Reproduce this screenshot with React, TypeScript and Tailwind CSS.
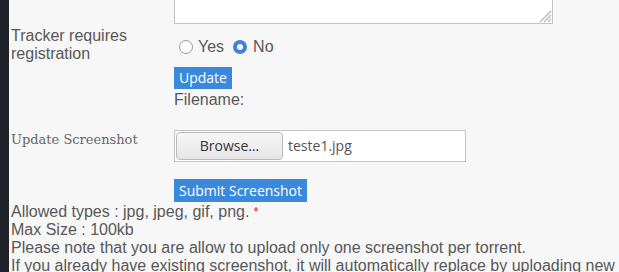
import React from "react";

export default function App() {
  const sans = { fontFamily: '"Liberation Sans", Arial, sans-serif' };
  return (
    <div className="flex h-[272px] w-[619px] overflow-hidden bg-[#f7f7f7]">
      <div className="w-[9px] shrink-0 bg-[#1e2127]" />
      <div className="flex-1 pl-[2px] text-[16px] leading-[18px] text-[#575757]" style={sans}>
        {/* textarea bottom */}
        <div className="flex">
          <div className="w-[163px] shrink-0" />
          <div className="relative h-[24px] w-[379px] border-x border-b border-[#c4c4c4] bg-white">
            <svg className="absolute bottom-0 right-0" width="14" height="14" viewBox="0 0 14 14">
              <path d="M13 2 L2 13 M13 6 L6 13 M13 10 L10 13" stroke="#b5b5b5" strokeWidth="1.3" />
            </svg>
          </div>
        </div>
        {/* tracker row */}
        <div className="mt-[3px] flex items-center">
          <div className="w-[150px] shrink-0">Tracker requires registration</div>
          <div className="ml-[13px] flex items-center pl-[5px] pt-[4px]">
            <span className="box-border h-[14px] w-[14px] rounded-full border border-[#9a9a9a] bg-white" />
            <span className="ml-[5px]">Yes</span>
            <span className="ml-[9px] box-border h-[14px] w-[14px] rounded-full border-[4px] border-[#3b84d9] bg-white" />
            <span className="ml-[6px]">No</span>
          </div>
        </div>
        <div className="flex">
          <div className="w-[163px] shrink-0" />
          <div className="flex flex-col items-start">
            <div
              className="mt-[4px] flex h-[22px] items-center bg-[#3b89dd] px-[5px] text-[14px] text-white"
              style={{ fontFamily: '"Open Sans", sans-serif' }}
            >
              Update
            </div>
            <div className="mt-[2px]">Filename:</div>
          </div>
        </div>
        {/* screenshot row */}
        <div className="mt-[21px] flex items-start">
          <div
            className="w-[163px] shrink-0 pt-[1px] text-[13px] text-[#666]"
            style={{ fontFamily: '"DejaVu Serif", serif' }}
          >
            Update Screenshot
          </div>
          <div className="flex h-[32px] w-[292px] items-center border border-[#c4c4c4] bg-white">
            <div
              className="ml-[1px] flex h-[28px] w-[107px] items-center justify-center rounded-[4px] border border-[#b9b9b9] bg-gradient-to-b from-[#f6f6f6] to-[#e6e6e6] text-[14px] text-[#333]"
              style={{ fontFamily: '"Open Sans", sans-serif' }}
            >
              Browse…
            </div>
            <span
              className="ml-[5px] text-[14px] text-[#555]"
              style={{ fontFamily: '"Open Sans", sans-serif' }}
            >
              teste1.jpg
            </span>
          </div>
        </div>
        <div className="flex">
          <div className="w-[163px] shrink-0" />
          <div
            className="mt-[17px] flex h-[23px] items-center bg-[#3b89dd] px-[5px] text-[14px] text-white"
            style={{ fontFamily: '"Open Sans", sans-serif' }}
          >
            Submit Screenshot
          </div>
        </div>
        <div className="mt-[1px] whitespace-nowrap">
          <div>
            Allowed types : jpg, jpeg, gif, png. <span className="align-top text-[12px] text-red-600">*</span>
          </div>
          <div>Max Size : 100kb</div>
          <div>Please note that you are allow to upload only one screenshot per torrent.</div>
          <div>If you already have existing screenshot, it will automatically replace by uploading new one.</div>
        </div>
      </div>
    </div>
  );
}
